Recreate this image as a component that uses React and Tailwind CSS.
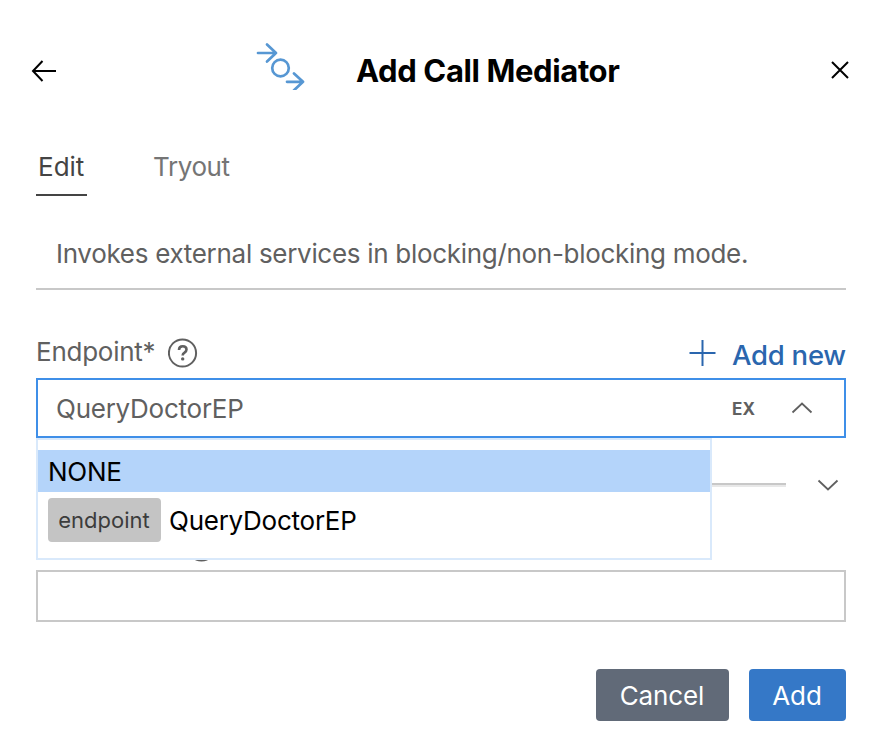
import React from "react";

function HelpIcon() {
  return (
    <svg className="size-[30px] shrink-0" viewBox="0 0 30 30" fill="none" stroke="#606060">
      <circle cx="14.5" cy="15" r="13.6" strokeWidth="2" />
      <path d="M11 12c0-2.4 1.5-3.8 3.7-3.8s3.8 1.3 3.8 3.3c0 1.6-.8 2.3-2 3.1-1.3.8-1.8 1.4-1.8 2.6v.4" strokeWidth="2.6" />
      <circle cx="14.7" cy="20.9" r="1.7" fill="#606060" stroke="none" />
    </svg>
  );
}

function CallMediatorIcon() {
  return (
    <svg className="h-[48px] w-[50px] shrink-0" viewBox="256 42 50 48" fill="none" stroke="#5797d3" strokeWidth="2.7" strokeLinecap="round" strokeLinejoin="round">
      <path d="M258 53h18M267 44.5l9 8.5-9 8.5" />
      <circle cx="280.5" cy="68" r="8.3" />
      <path d="M287 81.8h16M294 73.5l9 8.3-9 8.5" />
    </svg>
  );
}

function Chevron({ up }) {
  return (
    <svg className="h-[12px] w-[22px] shrink-0" viewBox="0 0 22 12" fill="none" stroke="#606060" strokeWidth="1.8">
      <path d={up ? "M1.5 10.5L11 1.5l9.5 9" : "M1.5 1.5L11 10.5l9.5-9"} />
    </svg>
  );
}

export default function App() {
  return (
    <div className="h-[740px] w-[880px] overflow-hidden bg-white font-['Inter',sans-serif] text-[26px] leading-[32px] tracking-[-0.25px] whitespace-nowrap text-[#606060]">
      <header className="flex h-[142px] items-center pr-[31px] pl-[31px] text-black">
        <svg className="h-[24px] w-[26px] shrink-0" viewBox="0 0 26 24" fill="none" stroke="currentColor" strokeWidth="2">
          <path d="M25 12H2M11.5 2L2 12l9.5 10" />
        </svg>
        <div className="-mt-[10px] ml-[199px] flex">
          <CallMediatorIcon />
        </div>
        <h1 className="ml-[50px] text-[31px] leading-[38px] font-bold tracking-[-0.38px]">Add Call Mediator</h1>
        <svg className="-mt-[2px] ml-auto size-[18px] shrink-0" viewBox="0 0 18 18" stroke="currentColor" strokeWidth="2">
          <path d="M1 1l16 16M17 1L1 17" />
        </svg>
      </header>

      <main className="pr-[34px] pl-[36px]">
        <nav className="flex gap-[65px] pt-[9px]">
          <div className="h-[45px] w-[51px] border-b-2 border-[#444] pl-[2px] tracking-normal text-[#444]">Edit</div>
          <div className="pl-[1px] tracking-[-0.4px] text-[#757575]">Tryout</div>
        </nav>

        <p className="mt-[42px] h-[52px] border-b-2 border-[#c8c8c8] pl-[20px] tracking-[-0.3px]">
          Invokes external services in blocking/non-blocking mode.
        </p>

        <div className="flex h-[88px] pt-[46px]">
          <label>Endpoint*</label>
          <span className="ml-[13px] flex pt-[2px]"><HelpIcon /></span>
          <button className="ml-auto flex h-[32px] gap-[15px] text-[#2a66ae]">
            <svg className="mt-[3px] size-[28px] shrink-0" viewBox="0 0 28 28" stroke="currentColor" strokeWidth="2">
              <path d="M0.5 14h26M13.5 1v26" />
            </svg>
            <span className="w-[114px] pt-[3px] text-left text-[27.5px] font-medium">Add new</span>
          </button>
        </div>

        <section className="relative">
          <div className="flex h-[60px] items-center border-2 border-[#3f8fe8] pl-[18px]">
            <span className="pt-[2px]">QueryDoctorEP</span>
            <span className="ml-auto pt-[2px] text-[17px] font-bold tracking-normal">EX</span>
            <span className="mr-[31px] ml-[36px] flex"><Chevron up /></span>
          </div>

          <div className="flex h-[94px] items-center justify-end pr-[7px]">
            <span className="h-[4px] w-[200px] border-t-2 border-[#c8c8c8] bg-[#e8e8e8]" />
            <span className="ml-[31px] flex"><Chevron /></span>
          </div>
          <div className="flex h-[38px] pl-[151px]"><HelpIcon /></div>

          <div className="absolute top-[60px] left-0 h-[122px] w-[676px] border-2 border-[#d9e9fb] bg-white pt-[10px] text-black">
            <div className="h-[42px] bg-[#b4d4fa] pt-[6px] pl-[10px]">NONE</div>
            <div className="mt-[6px] flex h-[44px] items-center gap-[8px] pl-[10px]">
              <span className="flex h-[44px] w-[113px] items-center justify-center rounded-[4px] bg-[#c4c4c4] pr-[1px] text-[22px] tracking-normal text-[#3c3c3c]">endpoint</span>
              <span className="pt-[2px]">QueryDoctorEP</span>
            </div>
          </div>
        </section>

        <div className="h-[52px] border-2 border-[#c8c8c8]" />

        <footer className="mt-[47px] flex justify-end gap-[20px] tracking-[-0.1px] text-white">
          <button className="h-[52px] w-[133px] rounded-[4px] bg-[#616a78] pt-[2px] pr-[1px]">Cancel</button>
          <button className="h-[52px] w-[97px] rounded-[4px] bg-[#3578c7] pt-[2px] pr-[1px]">Add</button>
        </footer>
      </main>
    </div>
  );
}
